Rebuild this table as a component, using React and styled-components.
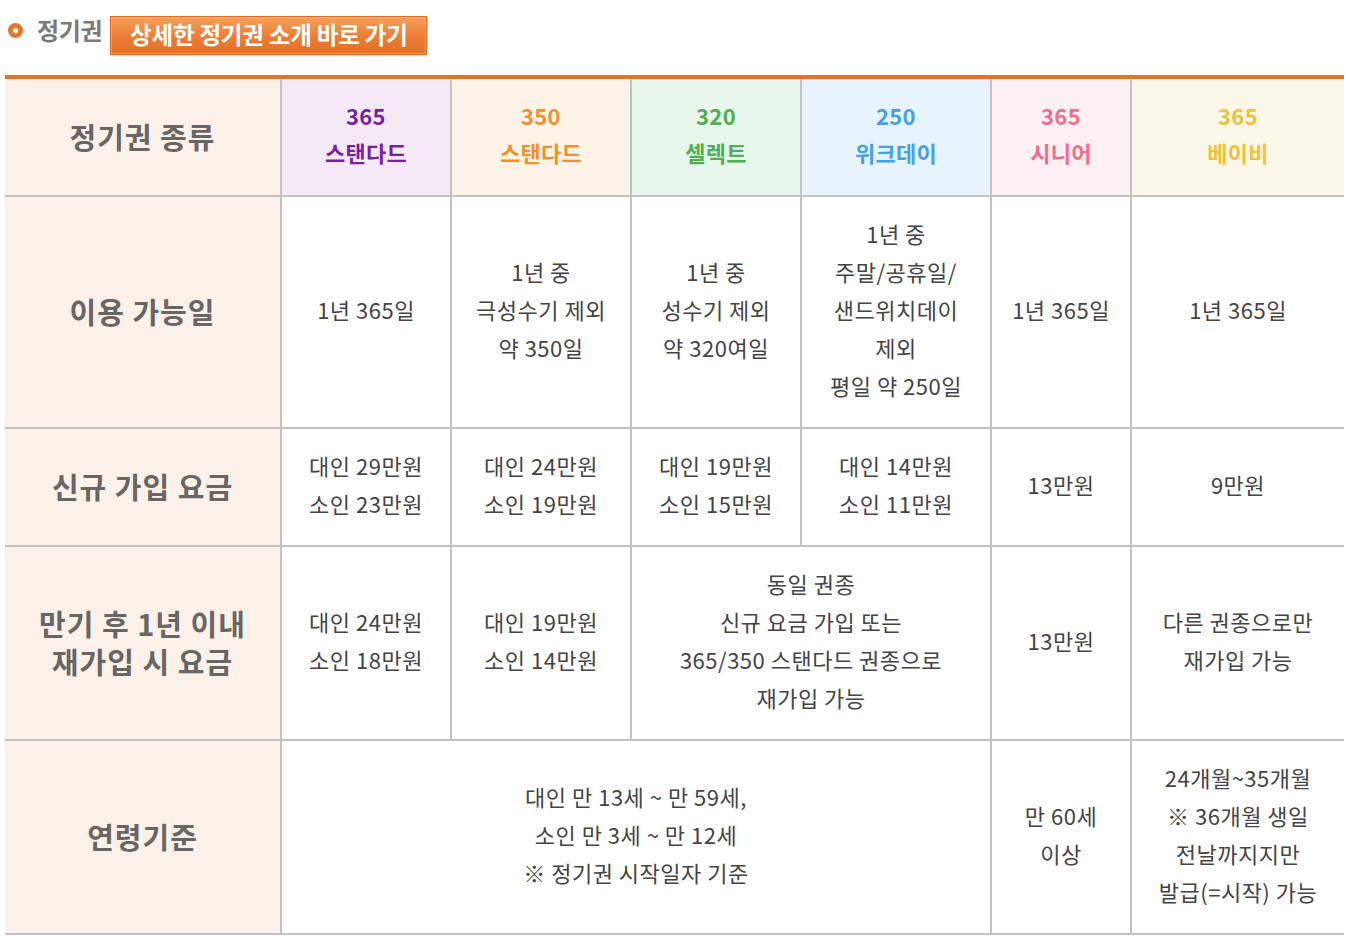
import React from "react";
import styled, { createGlobalStyle } from "styled-components";

const Global = createGlobalStyle`
  html, body { margin: 0; padding: 0; background: #fff; }
  body { font-family: "Noto Sans CJK KR", "Noto Sans", sans-serif; }
`;

const Page = styled.div`
  padding: 15px 0 0 5px;
  width: 1339px;
`;

const TitleBar = styled.div`
  display: flex;
  align-items: center;
  height: 40px;
  margin-bottom: 20px;
`;

const Bullet = styled.span`
  width: 15px;
  height: 15px;
  margin: 0 0 10px 3px;
  border-radius: 50%;
  background: radial-gradient(circle, #fdf0e4 0 2.5px, #e8742e 3.2px);
  flex: none;
`;

const Title = styled.h2`
  margin: 0 0 10px 14px;
  font-size: 24px;
  font-weight: 700;
  color: #7a7a7a;
  letter-spacing: -0.3px;
  line-height: 1;
`;

const LinkButton = styled.a`
  margin-left: 8px;
  height: 39px;
  width: 317px;
  box-sizing: border-box;
  display: flex;
  align-items: center;
  justify-content: center;
  padding-bottom: 2px;
  border: 1px solid #e06a1f;
  background: linear-gradient(#f7a05a, #ea7a32 60%, #e5702a);
  box-shadow: inset 0 0 0 1px rgba(255, 200, 150, 0.45), 0 1px 2px rgba(0,0,0,0.15);
  color: #fff;
  font-size: 23.5px;
  font-weight: 700;
  letter-spacing: -0.2px;
  text-decoration: none;
  cursor: pointer;
`;

const Grid = styled.div`
  display: grid;
  grid-template-columns: 275px 168px 178px 168px 188px 138px 212px;
  grid-template-rows: 116px 230px 116px 192px 192px;
  gap: 2px;
  background: #c2c2c2;
  border-top: 4px solid #ea7029;
  padding-bottom: 2px;
`;

const Cell = styled.div`
  display: flex;
  align-items: center;
  justify-content: center;
  box-sizing: border-box;
  padding-bottom: 6px;
  text-align: center;
  background: #fff;
  color: #444;
  font-size: 22px;
  letter-spacing: 0.5px;
  line-height: 38px;
  grid-column: ${(p) => (p.$span ? `span ${p.$span}` : "auto")};
`;

const LabelCell = styled(Cell)`
  padding-bottom: 2px;
  background: #fcf1e8;
  color: #666;
  font-size: 29px;
  font-weight: 700;
  letter-spacing: 1px;
`;

const HeadCell = styled(Cell)`
  background: ${(p) => p.$bg};
  color: ${(p) => p.$fg};
  font-size: 22px;
  font-weight: 700;
  letter-spacing: 0.3px;
  line-height: 37px;
`;

const Lines = ({ children }) => (
  <div>
    {children.map((t, i) => (
      <div key={i}>{t}</div>
    ))}
  </div>
);

const passes = [
  { n: "365", name: "스탠다드", fg: "#7b1fa2", bg: "#f3eaf6" },
  { n: "350", name: "스탠다드", fg: "#f0912a", bg: "#fdf3e6" },
  { n: "320", name: "셀렉트", fg: "#4caf50", bg: "#e9f6ec" },
  { n: "250", name: "위크데이", fg: "#45a0e6", bg: "#e8f4fd" },
  { n: "365", name: "시니어", fg: "#ec6f8b", bg: "#fcf0f4" },
  { n: "365", name: "베이비", fg: "#f0c23a", bg: "#fcf8e9" },
];

export default function App() {
  return (
    <>
      <Global />
      <Page>
        <TitleBar>
          <Bullet />
          <Title>정기권</Title>
          <LinkButton>상세한 정기권 소개 바로 가기</LinkButton>
        </TitleBar>
        <Grid>
          <LabelCell>정기권 종류</LabelCell>
          {passes.map((p, i) => (
            <HeadCell key={i} $bg={p.bg} $fg={p.fg}>
              <Lines>{[p.n, p.name]}</Lines>
            </HeadCell>
          ))}

          <LabelCell>이용 가능일</LabelCell>
          <Cell>1년 365일</Cell>
          <Cell><Lines>{["1년 중", "극성수기 제외", "약 350일"]}</Lines></Cell>
          <Cell><Lines>{["1년 중", "성수기 제외", "약 320여일"]}</Lines></Cell>
          <Cell><Lines>{["1년 중", "주말/공휴일/", "샌드위치데이", "제외", "평일 약 250일"]}</Lines></Cell>
          <Cell>1년 365일</Cell>
          <Cell>1년 365일</Cell>

          <LabelCell>신규 가입 요금</LabelCell>
          <Cell><Lines>{["대인 29만원", "소인 23만원"]}</Lines></Cell>
          <Cell><Lines>{["대인 24만원", "소인 19만원"]}</Lines></Cell>
          <Cell><Lines>{["대인 19만원", "소인 15만원"]}</Lines></Cell>
          <Cell><Lines>{["대인 14만원", "소인 11만원"]}</Lines></Cell>
          <Cell>13만원</Cell>
          <Cell>9만원</Cell>

          <LabelCell><Lines>{["만기 후 1년 이내", "재가입 시 요금"]}</Lines></LabelCell>
          <Cell><Lines>{["대인 24만원", "소인 18만원"]}</Lines></Cell>
          <Cell><Lines>{["대인 19만원", "소인 14만원"]}</Lines></Cell>
          <Cell $span={2}><Lines>{["동일 권종", "신규 요금 가입 또는", "365/350 스탠다드 권종으로", "재가입 가능"]}</Lines></Cell>
          <Cell>13만원</Cell>
          <Cell><Lines>{["다른 권종으로만", "재가입 가능"]}</Lines></Cell>

          <LabelCell>연령기준</LabelCell>
          <Cell $span={4}><Lines>{["대인 만 13세 ~ 만 59세,", "소인 만 3세 ~ 만 12세", "※ 정기권 시작일자 기준"]}</Lines></Cell>
          <Cell><Lines>{["만 60세", "이상"]}</Lines></Cell>
          <Cell><Lines>{["24개월~35개월", "※ 36개월 생일", "전날까지지만", "발급(=시작) 가능"]}</Lines></Cell>
        </Grid>
      </Page>
    </>
  );
}
